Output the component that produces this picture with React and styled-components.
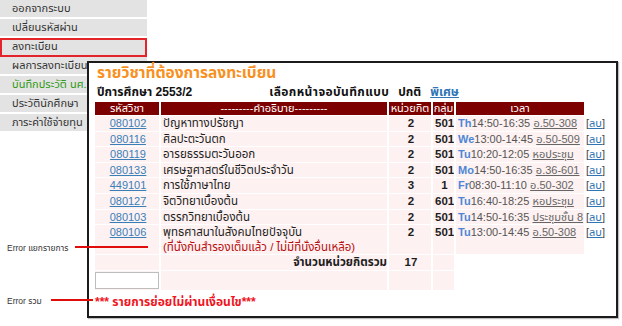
import React from "react";
import styled, { createGlobalStyle } from "styled-components";

const FONT = `Tahoma, "Liberation Sans", "Noto Sans Thai", "Noto Sans", sans-serif`;

const GlobalStyle = createGlobalStyle`
  body {
    margin: 0;
    background: #fff;
    font-family: ${FONT};
  }
`;

const menu = [
  { label: "ออกจากระบบ" },
  { label: "เปลี่ยนรหัสผ่าน" },
  { label: "ลงทะเบียน", active: true },
  { label: "ผลการลงทะเบียน" },
  { label: "บันทึกประวัติ นศ. ใหม่", green: true },
  { label: "ประวัตินักศึกษา" },
  { label: "ภาระค่าใช้จ่ายทุน" },
];

const courses = [
  { code: "080102", name: "ปัญหาทางปรัชญา", credit: 2, group: 501, day: "Th", time: "14:50-16:35", room: "อ.50-308" },
  { code: "080116", name: "ศิลปะตะวันตก", credit: 2, group: 501, day: "We", time: "13:00-14:45", room: "อ.50-509" },
  { code: "080119", name: "อารยธรรมตะวันออก", credit: 2, group: 501, day: "Tu", time: "10:20-12:05", room: "หอประชุม" },
  { code: "080133", name: "เศรษฐศาสตร์ในชีวิตประจำวัน", credit: 2, group: 501, day: "Mo", time: "14:50-16:35", room: "อ.36-601" },
  { code: "449101", name: "การใช้ภาษาไทย", credit: 3, group: 1, day: "Fr", time: "08:30-11:10", room: "อ.50-302" },
  { code: "080127", name: "จิตวิทยาเบื้องต้น", credit: 2, group: 601, day: "Tu", time: "16:40-18:25", room: "หอประชุม" },
  { code: "080103", name: "ตรรกวิทยาเบื้องต้น", credit: 2, group: 501, day: "Tu", time: "14:50-16:35", room: "ประชุมชั้น 8" },
  {
    code: "080106", name: "พุทธศาสนาในสังคมไทยปัจจุบัน", credit: 2, group: 501, day: "Tu", time: "13:00-14:45", room: "อ.50-308",
    error: "(ที่นั่งกันสำรองเต็มแล้ว / ไม่มีที่นั่งอื่นเหลือ)",
  },
];

const App = () => {
  return (
    <>
      <GlobalStyle />
      <Page>
        <Sidebar>
          {menu.map((m) => (
            <MenuItem key={m.label} $active={m.active} $green={m.green}>
              {m.label}
            </MenuItem>
          ))}
        </Sidebar>

        <Panel>
          <Title>รายวิชาที่ต้องการลงทะเบียน</Title>
          <InfoBar>
            <span>ปีการศึกษา 2553/2</span>
            <ModeChoice>เลือกหน้าจอบันทึกแบบ</ModeChoice>
            <Mode>ปกติ</Mode>
            <ModeLink href="#">พิเศษ</ModeLink>
          </InfoBar>

          <Table>
            <colgroup>
              <col style={{ width: 64 }} />
              <col style={{ width: 226 }} />
              <col style={{ width: 42 }} />
              <col style={{ width: 21 }} />
              <col style={{ width: 128 }} />
              <col style={{ width: 24 }} />
            </colgroup>
            <thead>
              <tr>
                <Th>รหัสวิชา</Th>
                <Th>---------คำอธิบาย---------</Th>
                <Th>หน่วยกิต</Th>
                <Th>กลุ่ม</Th>
                <Th>เวลา</Th>
                <ThBlank />
              </tr>
            </thead>
            <tbody>
              {courses.map((c) => (
                <tr key={c.code}>
                  <Td $align="center">
                    <CodeLink href="#">{c.code}</CodeLink>
                  </Td>
                  <Td>
                    {c.name}
                    {c.error && <RowError>{c.error}</RowError>}
                  </Td>
                  <Td $align="center" $bold>{c.credit}</Td>
                  <Td $align="center" $bold>{c.group}</Td>
                  <Td>
                    <Day>{c.day}</Day>
                    <Time>{c.time}</Time> <Room href="#">{c.room}</Room>
                  </Td>
                  <DelCell>
                    [<DelLink href="#">ลบ</DelLink>]
                  </DelCell>
                </tr>
              ))}
              <tr>
                <Td />
                <Td $align="right" $bold>จำนวนหน่วยกิตรวม</Td>
                <Td $align="center" $bold>17</Td>
                <Td />
                <Td $plain />
                <DelCell />
              </tr>
              <tr>
                <InputCell>
                  <Field type="text" />
                </InputCell>
                <Td />
                <Td />
                <Td />
                <Td $plain />
                <DelCell />
              </tr>
            </tbody>
          </Table>

          <TotalError>*** รายการย่อยไม่ผ่านเงื่อนไข***</TotalError>
        </Panel>

        <Note $top={242}>Error แยกรายการ</Note>
        <Pointer $top={246} $left={75} $width={73} />
        <Note $top={295}>Error รวม</Note>
        <Pointer $top={299} $left={51} $width={42} />
      </Page>
    </>
  );
};

export default App;

const Page = styled.div`
  position: relative;
  display: flex;
  align-items: flex-start;
  width: 622px;
  height: 326px;
  overflow: hidden;
`;

const Sidebar = styled.nav`
  flex-shrink: 0;
  display: flex;
  flex-direction: column;
  gap: 2px;
  width: 147px;
`;

const MenuItem = styled.div`
  position: relative;
  height: 17px;
  line-height: 17px;
  padding-left: 12px;
  background: #e3e3e3;
  color: ${(p) => (p.$green ? "#2f9a12" : "#333")};
  font-size: 11px;
  white-space: nowrap;

  &::after {
    content: "";
    display: ${(p) => (p.$active ? "block" : "none")};
    position: absolute;
    top: 0;
    bottom: -2px;
    left: 0;
    right: 0;
    border: 2px solid #e3242b;
  }
`;

const Panel = styled.section`
  position: relative;
  z-index: 1;
  flex-shrink: 0;
  box-sizing: border-box;
  width: 531px;
  height: 257px;
  margin-top: 61px;
  margin-left: -60px;
  padding: 0 4px;
  background: #fff;
  border: 2px solid #1b1b1b;
  box-shadow: 1px 1px 1px rgba(0, 0, 0, 0.25);
`;

const Title = styled.div`
  height: 20px;
  line-height: 20px;
  padding-left: 4px;
  color: #f7901e;
  font-size: 15.5px;
  font-weight: bold;
`;

const InfoBar = styled.div`
  display: flex;
  align-items: center;
  height: 18px;
  padding-left: 4px;
  font-size: 12px;
  font-weight: bold;
  color: #111;
`;

const ModeChoice = styled.span`
  margin-left: 77px;
  letter-spacing: 0.4px;
`;

const Mode = styled.span`
  margin-left: 9px;
`;

const ModeLink = styled.a`
  margin-left: 9px;
  color: #2f74b5;
  text-decoration: underline;
`;

const Table = styled.table`
  table-layout: fixed;
  width: 519px;
  border-collapse: separate;
  border-spacing: 2px 1px;
  font-size: 11.5px;
`;

const Th = styled.th`
  height: 13px;
  padding: 0;
  background: #7d0000;
  color: #fff;
  font-weight: normal;
  font-size: 11px;
  line-height: 13px;
  text-align: center;
  white-space: nowrap;
  overflow: hidden;
`;

const ThBlank = styled.th`
  padding: 0;
`;

const Td = styled.td`
  height: 14.6px;
  padding: 0 0 0 2px;
  background: ${(p) => (p.$plain ? "transparent" : "#fdf1f1")};
  color: #1e1e1e;
  text-align: ${(p) => p.$align || "left"};
  font-weight: ${(p) => (p.$bold ? "bold" : "normal")};
  vertical-align: top;
  line-height: 14.6px;
  white-space: nowrap;
  overflow: hidden;
`;

const InputCell = styled(Td)`
  height: 19px;
  padding: 0;
  background: #fdf1f1;
`;

const Field = styled.input`
  display: block;
  box-sizing: border-box;
  width: 64px;
  height: 17px;
  margin: 1px 0;
  border: 1px solid #bdbdbd;
  background: #fff;
`;

const DelCell = styled.td`
  padding: 0;
  color: #444;
  font-size: 11px;
  line-height: 14.6px;
  vertical-align: top;
  white-space: nowrap;
`;

const CodeLink = styled.a`
  color: #3a7fb8;
  font-size: 11px;
  text-decoration: underline;
`;

const RowError = styled.div`
  color: #b80f0f;
`;

const Day = styled.span`
  color: #4d86d6;
  font-size: 11px;
  font-weight: bold;
`;

const Time = styled.span`
  color: #555;
  font-size: 11px;
`;

const Room = styled.a`
  color: #666;
  font-size: 11px;
  text-decoration: underline;
`;

const DelLink = styled.a`
  color: #2f74b5;
  text-decoration: underline;
`;

const TotalError = styled.div`
  margin-top: 2px;
  padding-left: 2px;
  color: #f0141e;
  font-size: 12px;
  font-weight: bold;
`;

const Note = styled.div`
  position: absolute;
  top: ${(p) => p.$top}px;
  left: 7px;
  font-size: 8.5px;
  color: #333;
  white-space: nowrap;
`;

const Pointer = styled.div`
  position: absolute;
  z-index: 2;
  top: ${(p) => p.$top}px;
  left: ${(p) => p.$left}px;
  width: ${(p) => p.$width}px;
  height: 2px;
  background: #e00c0c;
`;
